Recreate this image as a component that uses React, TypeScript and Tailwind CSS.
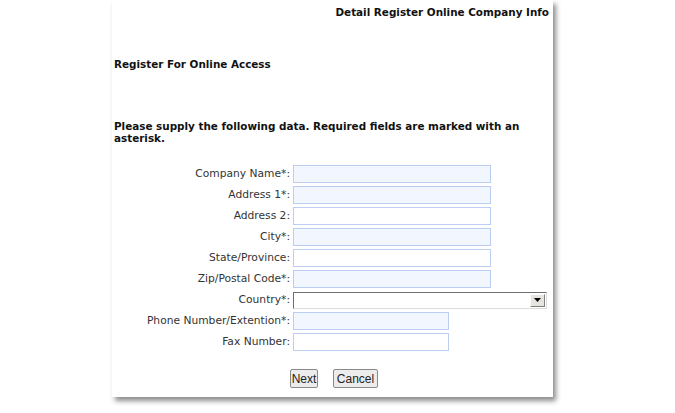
import React from 'react';

interface Field {
  label: string;
  required: boolean;
  width: string;
  kind?: 'select';
}

const fields: Field[] = [
  { label: 'Company Name*:', required: true, width: 'w-[198px]' },
  { label: 'Address 1*:', required: true, width: 'w-[198px]' },
  { label: 'Address 2:', required: false, width: 'w-[198px]' },
  { label: 'City*:', required: true, width: 'w-[198px]' },
  { label: 'State/Province:', required: false, width: 'w-[198px]' },
  { label: 'Zip/Postal Code*:', required: true, width: 'w-[198px]' },
  { label: 'Country*:', required: true, width: 'w-[254px]', kind: 'select' },
  { label: 'Phone Number/Extention*:', required: true, width: 'w-[156px]' },
  { label: 'Fax Number:', required: false, width: 'w-[156px]' },
];

const SelectBox: React.FC<{ width: string }> = ({ width }) => (
  <div className={`${width} h-[17px] flex items-stretch bg-white border border-t-[#6f6f6f] border-l-[#6f6f6f] border-r-[#dcdcdc] border-b-[#dcdcdc]`}>
    <div className="flex-1" />
    <div className="w-[15px] my-[1px] mr-[1px] bg-[#e6e4df] border border-t-white border-l-white border-r-[#808080] border-b-[#808080] flex items-center justify-center">
      <svg width="7" height="4" viewBox="0 0 7 4">
        <path d="M0 0h7L3.5 4z" fill="#000" />
      </svg>
    </div>
  </div>
);

const FormRow: React.FC<Field> = ({ label, required, width, kind }) => (
  <div className="flex items-center h-[18px]">
    <div className="w-[181px] text-right pr-[3px] text-[#333333]">{label}</div>
    {kind === 'select' ? (
      <SelectBox width={width} />
    ) : (
      <div
        className={`${width} h-[18px] border border-[#bccdf2] ${required ? 'bg-[#f1f6ff]' : 'bg-white'}`}
      />
    )}
  </div>
);

const App: React.FC = () => (
  <div className="w-[675px] h-[413px] bg-white overflow-hidden font-['DejaVu_Sans',Verdana,sans-serif] text-[10.7px]">
    <div className="ml-[112px] w-[441px] h-[397px] bg-white shadow-[3px_4px_5px_rgba(0,0,0,0.45)]">
      <div className="text-right pr-[4px] pt-[5px] font-bold text-[10.4px] text-[#111]">Detail Register Online Company Info</div>

      <div className="mt-[36px] pl-[2px] font-bold text-[10.4px] text-[#111]">Register For Online Access</div>

      <p className="mt-[48px] pl-[2px] pr-[20px] font-bold text-[10.4px] text-[#111] leading-[12px]">
        Please supply the following data. Required fields are marked with an asterisk.
      </p>

      <div className="mt-[21px] flex flex-col gap-[3px]">
        {fields.map((f) => (
          <FormRow key={f.label} {...f} />
        ))}
      </div>

      <div className="mt-[18px] ml-[3px] flex justify-center gap-[15px] font-['Liberation_Sans',Arial,sans-serif] text-[12px]">
        <button className="w-[28px] h-[19px] bg-[#ececec] border border-[#8a8a8a] rounded-[2px] text-[#222]">Next</button>
        <button className="w-[45px] h-[19px] bg-[#ececec] border border-[#8a8a8a] rounded-[2px] text-[#222]">Cancel</button>
      </div>
    </div>
  </div>
);

export default App;
